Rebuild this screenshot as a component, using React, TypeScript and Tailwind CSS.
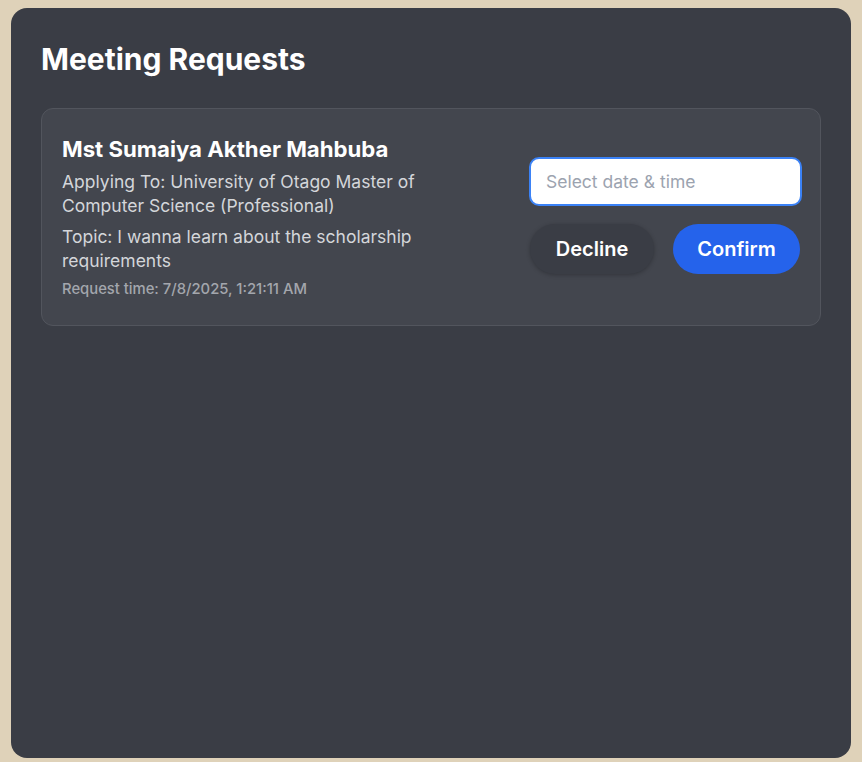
export default function App() {
  return (
    <div className="min-h-screen bg-[#dfd2b9] px-[11px] pt-2" style={{ fontFamily: "Inter, 'Noto Sans', sans-serif" }}>
      <div className="h-[750px] rounded-[16px] bg-[#3a3d45] px-[30px] pt-[30px]">
        <h1 className="text-[30px] font-bold leading-[42px] text-white">Meeting Requests</h1>

        <div className="mt-7 flex items-center justify-between rounded-xl border border-[#52555d] bg-[#43464e] pb-[26px] pl-5 pr-[18px] pt-[25px]">
          <div className="max-w-[380px]">
            <h2 className="text-[22.2px] font-bold leading-[30px] text-white">Mst Sumaiya Akther Mahbuba</h2>
            <p className="mt-[6px] text-[17.5px] leading-6 text-[#d4d6da]">
              Applying To: University of Otago Master of Computer Science (Professional)
            </p>
            <p className="mt-[7px] text-[17.5px] leading-6 text-[#d4d6da]">
              Topic: I wanna learn about the scholarship requirements
            </p>
            <p className="mt-[6px] text-[14.8px] font-medium leading-5 text-[#a3a6ad]">
              Request time: 7/8/2025, 1:21:11 AM
            </p>
          </div>

          <div className="mb-[3px] flex w-[273px] flex-col">
            <input
              type="text"
              placeholder="Select date & time"
              className="h-[49px] w-full rounded-[10px] border-2 border-[#3b82f6] bg-white px-[15px] text-[17.5px] text-gray-800 placeholder:text-[#9ca3af] outline-none"
            />
            <div className="mt-[18px] flex items-center justify-between pl-px pr-[2px]">
              <button className="h-[50px] w-[124px] rounded-full bg-[#3a3d45] text-[20px] font-semibold text-white shadow-[0_1px_4px_rgba(0,0,0,0.25)]">
                Decline
              </button>
              <button className="h-[50px] w-[127px] rounded-full bg-[#2563eb] text-[20px] font-semibold text-white">
                Confirm
              </button>
            </div>
          </div>
        </div>
      </div>
    </div>
  );
}
